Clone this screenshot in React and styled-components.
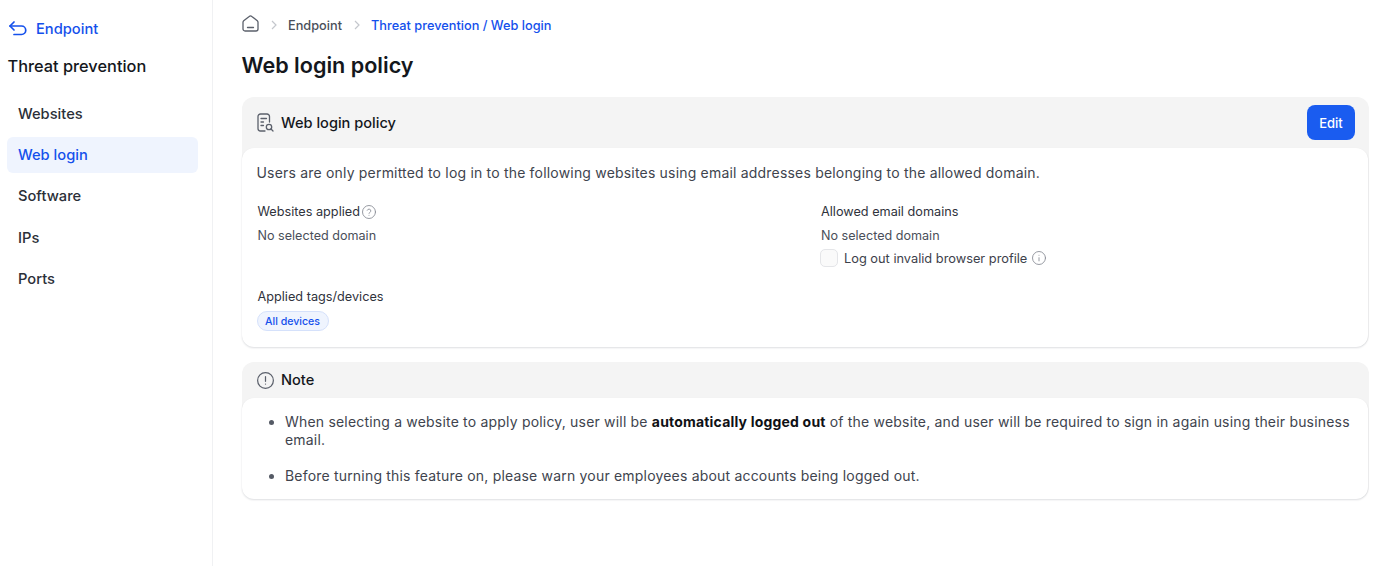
import React from "react";
import styled, { createGlobalStyle } from "styled-components";

const Global = createGlobalStyle`
  html, body { margin: 0; padding: 0; background: #fff; }
  body { font-family: Inter, "Liberation Sans", sans-serif; color: #0f1419; }
`;
const Page = styled.div`display: flex; width: 1392px; height: 566px; overflow: hidden;`;
const Sidebar = styled.aside`
  width: 213px; flex: none; box-sizing: border-box; border-right: 1px solid #f0f1f3;
  padding: 19px 14px 0 7px;
`;
const BackLink = styled.a`
  display: flex; align-items: center; gap: 8px; height: 20px; padding-left: 1px;
  color: #1450ec; font-size: 14.7px; font-weight: 500;
`;
const SideTitle = styled.div`
  font-size: 16.35px; font-weight: 500; line-height: 20px; margin: 17px 0 0 0.5px; color: #14171c;
`;
const Nav = styled.nav`display: flex; flex-direction: column; gap: 5.35px; margin-top: 19.6px;`;
const NavItem = styled.div`
  height: 36px; display: flex; align-items: center; padding-left: 11px; border-radius: 6px;
  font-size: 14.7px; font-weight: 500;
  color: ${p => (p.$active ? "#1450ec" : "#2b2f38")};
  background: ${p => (p.$active ? "#eff4fe" : "transparent")};
`;
const Main = styled.main`flex: 1; min-width: 0; padding: 15px 23px 0 29px;`;
const Crumbs = styled.div`
  display: flex; align-items: center; height: 20px; font-size: 12.75px; font-weight: 500; color: #4a4f5a;
`;
const HomeSlot = styled.span`display: flex; align-self: flex-start;`;
const CrumbSep = styled.span`display: flex; margin: 0 10.5px; color: #c4c7cd;`;
const CrumbActive = styled.span`color: #1450ec;`;
const Title = styled.h1`
  font-size: 21.6px; font-weight: 600; line-height: 28px; margin: 16px 0 18px -0.5px; color: #14171c;
`;
const Card = styled.section`
  background: #f4f4f4; border-radius: 12px; margin-bottom: 15px;
`;
const CardHead = styled.div`
  display: flex; align-items: center; gap: 7px; padding: 0 14px 0 15px;
  box-sizing: border-box;
  height: ${p => p.$h}px; font-size: 14.6px; font-weight: 500; color: #14171c;
`;
const HeadLabel = styled.span`flex: 1;`;
const EditButton = styled.button`
  width: 48px; height: 35px; border: 0; border-radius: 8px; background: #1a5cf0; color: #fff;
  font: 500 13px Inter, sans-serif; padding: 0;
`;
const CardBody = styled.div`
  background: #fff; border-radius: 12px; margin: 0 1px 0 0; box-sizing: border-box;
  height: ${p => p.$h}px; box-shadow: 0 1px 2px rgba(16, 24, 40, .14);
`;
const Info = styled.div`padding: 15px 15px 0 14.5px;`;
const Lead = styled.p`margin: 0; font-size: 14px; letter-spacing: 0.19px; line-height: 20px; color: #40444e;`;
const Grid = styled.div`
  display: grid; grid-template-columns: 563.5px 1fr; margin: 19px 0 0 1px;
`;
const Label = styled.div`
  display: flex; align-items: center; gap: 2px; font-size: 12.7px; line-height: 20px; color: #2f333c;
`;
const Value = styled.div`font-size: 12.6px; line-height: 20px; margin-top: 3.5px; color: #4a4f5a;`;
const CheckRow = styled.div`
  display: flex; align-items: center; font-size: 12.8px; color: #3d414b; height: 20px; margin-top: 2.5px;
`;
const Check = styled.span`
  width: 18px; height: 18px; box-sizing: border-box; border: 1px solid #e4e5e8; border-radius: 5px; background: #fafafa; margin: 0 6px 0 -1px; flex: none;
`;
const CheckText = styled.span`margin-right: 5px;`;
const Applied = styled.div`margin: 18.5px 0 0 1px;`;
const Tag = styled.span`
  display: inline-block; margin-top: 4px; height: 20px; line-height: 19px; padding: 0 7.5px 0 7px; margin-left: -0.5px; box-sizing: border-box;
  border: 1px solid #d5e1fb; border-radius: 10px; background: #eff4fe; color: #1450ec; font-size: 10.6px; font-weight: 500;
`;
const Notes = styled.ul`margin: 0; padding: 15px 15px 0 43px;`;
const Note = styled.li`
  font-size: 14px; letter-spacing: 0.19px; line-height: 18px; color: #40444e; margin-bottom: 18px;
  &::marker { color: #555a65; }
`;
const Strong = styled.b`font-weight: 700; color: #0f1115;`;

const Icon = ({ w, h, box, children, color = "#5b606b", sw = 1.4 }) => (
  <svg width={w} height={h} viewBox={box} fill="none" stroke={color} strokeWidth={sw} strokeLinecap="round" strokeLinejoin="round" style={{ flex: "none" }}>{children}</svg>
);
const Chevron = () => (
  <CrumbSep><svg width="8" height="10" viewBox="0 0 8 10" fill="none" stroke="currentColor" strokeWidth="1.2"><path d="m2 1 4 4-4 4" /></svg></CrumbSep>
);

export default function App() {
  return (
    <Page>
      <Global />
      <Sidebar>
        <BackLink>
          <svg width="20" height="16" viewBox="0 0 20 16" fill="none" stroke="#1450ec" strokeWidth="1.7" strokeLinecap="round" strokeLinejoin="round"><path d="M6 1 2 5l4 4" /><path d="M2 5h11.5a4 4 0 0 1 0 8.5H6" /></svg>
          Endpoint
        </BackLink>
        <SideTitle>Threat prevention</SideTitle>
        <Nav>
          <NavItem>Websites</NavItem>
          <NavItem $active>Web login</NavItem>
          <NavItem>Software</NavItem>
          <NavItem>IPs</NavItem>
          <NavItem>Ports</NavItem>
        </Nav>
      </Sidebar>
      <Main>
        <Crumbs>
          <HomeSlot>
            <Icon w={17} h={17} box="0 0 17 17" sw={1.3}><path d="M1 7.2c0-.6.3-1.1.7-1.5L7.2 1.4a2 2 0 0 1 2.6 0l5.5 4.3c.4.4.7.9.7 1.5V14a2 2 0 0 1-2 2H3a2 2 0 0 1-2-2z" /><path d="M5.5 12.5h6" /></Icon>
          </HomeSlot>
          <Chevron />
          Endpoint
          <Chevron />
          <CrumbActive>Threat prevention / Web login</CrumbActive>
        </Crumbs>
        <Title>Web login policy</Title>
        <Card>
          <CardHead $h={51}>
            <Icon w={17} h={19} box="0 0 17 19" sw={1.3}><path d="M8 18H3.5A2.5 2.5 0 0 1 1 15.5v-12A2.5 2.5 0 0 1 3.5 1h6.5A2.5 2.5 0 0 1 12.5 3.5V9" /><path d="M4 5.5h5.5M4 9h2.5M4 12.5h2.5" /><circle cx="12" cy="14" r="2.7" /><path d="m14 16 2 2" /></Icon>
            <HeadLabel>Web login policy</HeadLabel>
            <EditButton>Edit</EditButton>
          </CardHead>
          <CardBody $h={199}>
            <Info>
              <Lead>Users are only permitted to log in to the following websites using email addresses belonging to the allowed domain.</Lead>
              <Grid>
                <div>
                  <Label>Websites applied
                    <Icon w={14} h={14} box="1 1 22 22" color="#8a8e97" sw={1.4}><circle cx="12" cy="12" r="10.2" /><path d="M9.2 9.3a2.9 2.9 0 0 1 5.6 1c0 1.9-2.8 2.4-2.8 3.9" /><path d="M12 17.3h.01" /></Icon>
                  </Label>
                  <Value>No selected domain</Value>
                </div>
                <div>
                  <Label>Allowed email domains</Label>
                  <Value>No selected domain</Value>
                  <CheckRow>
                    <Check />
                    <CheckText>Log out invalid browser profile</CheckText>
                    <Icon w={14} h={14} box="1 1 22 22" color="#8a8e97" sw={1.4}><circle cx="12" cy="12" r="10.2" /><path d="M12 11.5v5" /><path d="M12 7.8h.01" /></Icon>
                  </CheckRow>
                </div>
              </Grid>
              <Applied>
                <Label>Applied tags/devices</Label>
                <Tag>All devices</Tag>
              </Applied>
            </Info>
          </CardBody>
        </Card>
        <Card>
          <CardHead $h={36}>
            <Icon w={17} h={17} box="1 1 22 22" sw={1.6}><circle cx="12" cy="12" r="10.2" /><path d="M12 7v6" /><path d="M12 16.6h.01" /></Icon>
            <HeadLabel>Note</HeadLabel>
          </CardHead>
          <CardBody $h={101}>
            <Notes>
              <Note>When selecting a website to apply policy, user will be <Strong>automatically logged out</Strong> of the website, and user will be required to sign in again using their business email.</Note>
              <Note>Before turning this feature on, please warn your employees about accounts being logged out.</Note>
            </Notes>
          </CardBody>
        </Card>
      </Main>
    </Page>
  );
}
